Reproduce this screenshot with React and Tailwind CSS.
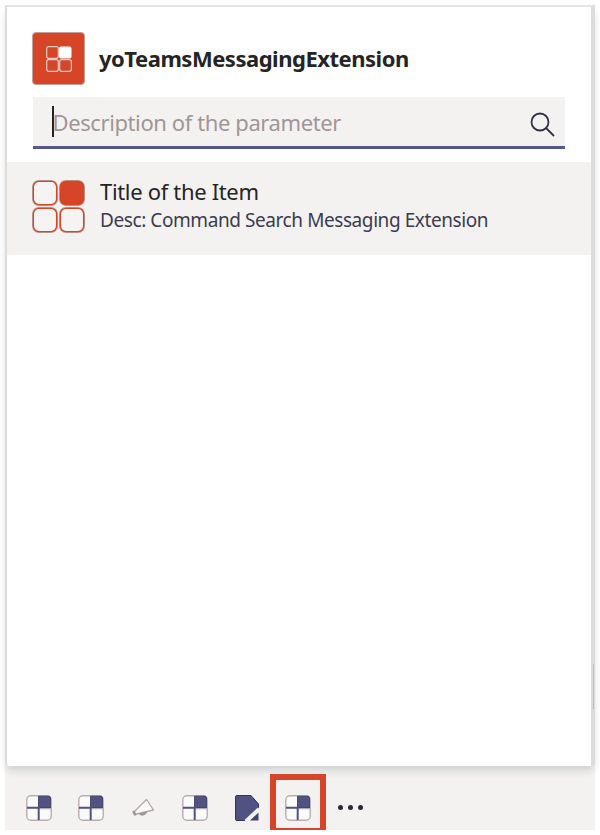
const Tiles = ({ className, children }) => (
  <svg className={className} viewBox="0 0 26 26" fill="none">{children}</svg>
);

function SmallTiles() {
  return (
    <Tiles className="size-[26px] shrink-0">
      <rect x="0.8" y="0.8" width="24.4" height="24.4" rx="4" fill="#fafafa" stroke="#b8adaf" strokeWidth="1.4" />
      <path d="M12.500 1.200h10.500Q24.500 1.500 24.500 3V13H12.500Z" fill="#505381" stroke="#34345a" strokeWidth="0.8" />
      <path d="M1 12.700H12.700V25" stroke="#505381" strokeWidth="2" />
      <path d="M14 13.800H25" stroke="#b5abac" strokeWidth="0.8" />
    </Tiles>
  );
}

function AppLogo() {
  return (
    <div className="flex size-[53px] items-center justify-center rounded-[4px] border border-[#c59e97] bg-[#d64528]">
      <Tiles className="size-[26px]">
        <rect x="0.700" y="0.700" width="11.600" height="11.600" rx="2" stroke="#e0cbc7" strokeWidth="1.200" />
        <rect x="13" y="0.500" width="12.500" height="12" rx="2" fill="#fff" />
        <rect x="0.700" y="13.700" width="11.600" height="11.600" rx="2" stroke="#e0cbc7" strokeWidth="1.200" />
        <rect x="13.700" y="13.700" width="11.600" height="11.600" rx="2" stroke="#e0cbc7" strokeWidth="1.200" />
      </Tiles>
    </div>
  );
}

function ItemLogo() {
  const cells = [[1, 1], [28, 1], [1, 28], [28, 28]];
  return (
    <svg className="size-[53px] shrink-0" viewBox="0 0 53 53" fill="none">
      {cells.map(([x, y], i) => (
        <g key={i}>
          <rect x={x - 0.300} y={y - 0.300} width="24.600" height="24.600" rx="6" fill={i === 1 ? "#d64528" : "#f5f4f3"} stroke="#b7a5a2" strokeWidth="1.400" />
          <rect x={x + 0.400} y={y + 0.400} width="23.200" height="23.200" rx="5.500" stroke="#d64528" strokeWidth="1.300" />
        </g>
      ))}
    </svg>
  );
}

function Megaphone() {
  return (
    <svg className="h-[20px] w-[24px] shrink-0" viewBox="0 0 24 20" fill="none" stroke="#b0a5a7" strokeWidth="1.300" strokeLinejoin="round">
      <path d="M3 14 15.500 1.500 22.500 12 3.500 16.500Z" fill="#fafafa" />
      <path d="M2.700 13.800 4 16.300" stroke="#a0979a" strokeWidth="2.600" strokeLinecap="round" />
      <path d="M8.500 15.800Q12 18.800 15.500 14.300Z" fill="#a0979a" stroke="#a0979a" />
    </svg>
  );
}

function Note() {
  return (
    <svg className="h-[26px] w-[24px] shrink-0" viewBox="0 0 24 26">
      <path d="M2 .5H16L23.500 9V14L11 25.500H2Q.5 25.500 .5 24V2Q.5 .5 2 .5Z" fill="#505381" stroke="#34345a" />
      <path d="M10.500 26 24 13.500" stroke="#f3f2f1" strokeWidth="3" />
      <path d="M23.500 17.500V25.500H15Z" fill="#43446b" />
    </svg>
  );
}

export default function App() {
  return (
    <div className="h-[835px] w-[600px] overflow-hidden bg-white pt-[5px] pl-[5px] font-['Noto_Sans','Open_Sans',sans-serif] text-[#252424]">
      <main className="flex h-[825px] w-[590px] flex-col bg-[#f3f2f1]">
        <section className="relative z-10 h-[761px] w-[590px] shrink-0 rounded-b-[4px] border-t-2 border-r-4 border-l-2 border-t-[#e3e3e3] border-r-[#dcdcdc] border-l-[#dcdcdc] bg-white shadow-[0_6px_8px_-2px_#cecece]">
          <header className="flex h-[90px] items-center gap-[14px] pt-[13px] pl-[25px]">
            <AppLogo />
            <h1 className="-mt-[2px] text-[22px] leading-[30px] font-bold whitespace-nowrap tracking-[-0.480px]">yoTeamsMessagingExtension</h1>
          </header>
          <div className="ml-[26px] flex h-[52px] w-[532px] items-center border-b-[3px] border-[#55598a] bg-[#f3f2f1] pr-[10px] pl-[19px]">
            <span className="h-[31px] w-[1.500px] bg-[#252424]" />
            <span className="-ml-px text-[22px] leading-[30px] whitespace-nowrap tracking-[-0.400px] text-[#a19596]">Description of the parameter</span>
            <svg className="mt-[6px] ml-auto size-[25px]" viewBox="0 0 25 25" fill="none" stroke="#30304a" strokeWidth="1.800">
              <circle cx="10" cy="10" r="8.500" />
              <path d="M16 16 24 24" />
            </svg>
          </div>
          <article className="mt-[13px] flex h-[93px] items-start gap-[15px] bg-[#f3f2f1] pt-[18px] pl-[25px]">
            <ItemLogo />
            <div className="-mt-[4px] whitespace-nowrap">
              <h2 className="text-[22px] leading-[30px] tracking-[-0.330px]">Title of the Item</h2>
              <p className="mt-px text-[19px] leading-[26px] tracking-[-0.420px] text-[#3c3b52]">Desc: Command Search Messaging Extension</p>
            </div>
          </article>
          <div className="absolute top-[657px] -right-[3px] h-[45px] w-px bg-[#cbb4b7]" />
        </section>
        <footer className="flex h-[64px] items-end pl-[21px]">
          <div className="flex h-[56px] items-center">
            <div className="flex w-[52px] pt-[11px]"><SmallTiles /></div>
            <div className="flex w-[52px] pt-[11px]"><SmallTiles /></div>
            <div className="flex w-[52px] pt-[11px] pl-[1px]"><Megaphone /></div>
            <div className="flex w-[52px] pt-[11px]"><SmallTiles /></div>
            <div className="flex w-[36px] pt-[11px] pl-px"><Note /></div>
            <div className="relative z-20 flex h-[56px] w-[56px] justify-center border-x-[6px] border-t-[6px] border-b-2 border-[#d64528] bg-[#f3f2f1] pt-[15px]"><SmallTiles /></div>
            <div className="ml-[12px] flex gap-[5px] pt-[11px]">
              <i className="size-[5px] rounded-full bg-[#292837]" />
              <i className="size-[5px] rounded-full bg-[#292837]" />
              <i className="size-[5px] rounded-full bg-[#292837]" />
            </div>
          </div>
        </footer>
      </main>
    </div>
  );
}
